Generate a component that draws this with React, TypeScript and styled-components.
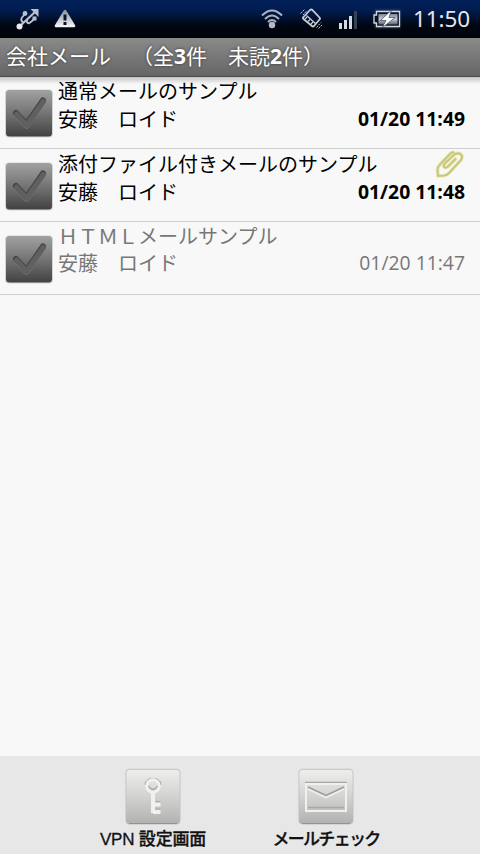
import React from "react";
import styled, { createGlobalStyle } from "styled-components";

const GlobalStyle = createGlobalStyle`
  * { box-sizing: border-box; }
  body { margin: 0; background: #f8f8f8; }
`;

const Screen = styled.div`
  width: 480px;
  height: 854px;
  display: flex;
  flex-direction: column;
  overflow: hidden;
  background: #f8f8f8;
  font-family: "Open Sans", "Noto Sans CJK JP", sans-serif;
  text-spacing-trim: space-all;
`;

const StatusBar = styled.header`
  height: 38px;
  flex: none;
  display: flex;
  align-items: center;
  justify-content: space-between;
  padding: 0 9px 0 15px;
  background: linear-gradient(#002059 0, #001c50 10px, #00153c 16px, #000c22 21px, #000610 28px, #00040a 38px);
`;

const StatusGroup = styled.div<{ $gap: number }>`
  display: flex;
  align-items: center;
  gap: ${(p) => p.$gap}px;
  svg { display: block; }
`;

const Clock = styled.time`
  width: 58px;
  margin-left: -4px;
  font-family: "Noto Sans", "Open Sans", sans-serif;
  font-size: 22.5px;
  line-height: 38px;
  letter-spacing: -0.1px;
  white-space: nowrap;
  color: #e4e6ea;
`;

const TitleBar = styled.h1`
  height: 39px;
  flex: none;
  margin: 0;
  padding-left: 6px;
  font-size: 21px;
  font-weight: 400;
  line-height: 37px;
  white-space: nowrap;
  color: #fff;
  text-shadow: 0 0 3px #333;
  background: linear-gradient(#8a8a8a, #656565);
  border-bottom: 1px solid #4b4b4b;
`;

const MailList = styled.ul`
  flex: 1;
  margin: 0;
  padding: 0;
  list-style: none;
  background: linear-gradient(#c4c4c4, #f8f8f8 7px);
`;

const MailRow = styled.li<{ $read?: boolean; $first?: boolean }>`
  height: ${(p) => (p.$first ? 72 : 73)}px;
  display: flex;
  align-items: flex-start;
  padding: ${(p) => (p.$first ? 0 : 1)}px 15px 0 4px;
  border-bottom: 1px solid #cfcfcf;
  font-size: 20px;
  color: ${(p) => (p.$read ? "#777" : "#000")};
`;

const CheckSlot = styled.div`
  width: 54px;
  flex: none;
  padding-top: 11px;
  svg { display: block; }
`;

const MailBody = styled.div`
  flex: 1;
  display: flex;
  flex-direction: column;
`;

const Line = styled.div<{ $read?: boolean; $height: number }>`
  height: ${(p) => p.$height}px;
  display: flex;
  justify-content: space-between;
  line-height: ${(p) => (p.$read ? 28 : 30)}px;
  white-space: nowrap;
`;

const DateText = styled.time<{ $read?: boolean }>`
  font-size: 19.35px;
  font-weight: ${(p) => (p.$read ? 400 : 700)};
  line-height: ${(p) => (p.$read ? 26 : 28)}px;
`;

const Footer = styled.nav`
  height: 98px;
  flex: none;
  display: flex;
  justify-content: center;
  gap: 53px;
  padding: 12px 1px 0 0;
  background: #e7e7e7;
`;

const FooterButton = styled.button`
  width: 120px;
  padding: 0;
  border: 0;
  background: none;
  display: flex;
  flex-direction: column;
  align-items: center;
`;

const FooterLabel = styled.span<{ $tracking?: number }>`
  font-family: "Liberation Sans", "Noto Sans CJK JP", sans-serif;
  font-size: 17px;
  font-weight: 500;
  letter-spacing: ${(p) => p.$tracking ?? 0}px;
  line-height: 27px;
  white-space: nowrap;
  color: #111;
  -webkit-text-stroke: 0.3px #111;
`;

const UsbIcon = () => (
  <svg width="26" height="24" viewBox="0 0 26 24" fill="none" stroke="#b9bfcb" strokeWidth="1.9">
    <path d="M5 19 L20 5" strokeWidth="2.2" />
    <path d="M8.500 16 Q5 13 7 10.500 L9.500 7.500 M12.500 12.500 Q10.500 16 14 16.300 L17 14 L19.500 11.500" />
    <path d="M15.500 2 H23.500 V10 Z" fill="#b9bfcb" stroke="none" />
    <circle cx="4.500" cy="19.500" r="3" fill="#e8eaf0" stroke="none" />
    <circle cx="10" cy="6.500" r="2.400" fill="#b9bfcb" stroke="none" />
    <rect x="17.500" y="9.500" width="4" height="4" fill="#b9bfcb" stroke="none" />
  </svg>
);

const WarningIcon = () => (
  <svg width="24" height="22" viewBox="0 0 24 22">
    <defs>
      <linearGradient id="warn" x2="0" y2="1">
        <stop stopColor="#8e95a5" />
        <stop offset="1" stopColor="#f0f2f4" />
      </linearGradient>
    </defs>
    <path d="M12 3 L21 18 H3 Z" fill="url(#warn)" stroke="url(#warn)" strokeWidth="2.600" strokeLinejoin="round" />
    <path d="M10.500 6.500 H13.500 V12.500 H10.500 Z M10.500 14 H13.500 V17 H10.500 Z" fill="#0b1426" />
  </svg>
);

const WifiIcon = () => (
  <svg width="24" height="22" viewBox="0 0 24 22" fill="none" stroke="#aab0bf" strokeWidth="2">
    <path d="M2 7.500 Q12 -2.500 22 7.500" />
    <path d="M5 11 Q12 4 19 11" />
    <path d="M8 14 Q12 10 16 14" />
    <circle cx="12" cy="17" r="3.200" fill="#b5bac6" stroke="none" />
  </svg>
);

const VibrateIcon = () => (
  <svg width="24" height="22" viewBox="0 0 24 22" fill="none" stroke="#c8ccd5" strokeWidth="1.8" strokeLinejoin="round">
    <path d="M11 2 Q12.500 1 13.500 2.200 L20.500 9.500 Q21.500 10.500 20.500 11.500 L15 18 Q14 19 13 18 L4.500 11 Q3.500 10 4.500 9 Z" />
    <path d="M7.500 7.500 L16.500 15.500" strokeWidth="1.300" />
    <path d="M6 11 L8 9 M9 13.500 L11 11.500 M12 16 L14 14" strokeWidth="1.200" />
    <path d="M1.500 5.500 L6 1 M4 7 L8 2.500 M17.500 19.500 L22 14.500 M19.500 20.500 L23.500 16.500" strokeWidth="1" strokeDasharray="2 1" />
  </svg>
);

const SignalIcon = () => (
  <svg width="19" height="19" viewBox="0 0 19 19">
    <path d="M1 13 H4 V19 H1 Z M6 10 H9 V19 H6 Z M11 6 H14 V19 H11 Z" fill="#d5d9e0" />
    <path d="M16 1 H19 V19 H16 Z" fill="#394050" />
  </svg>
);

const BatteryIcon = () => (
  <svg width="30" height="22" viewBox="0 0 30 22">
    <defs>
      <linearGradient id="battery" x2="0" y2="1">
        <stop stopColor="#81899d" />
        <stop offset=".5" stopColor="#c4c8d0" />
        <stop offset="1" stopColor="#5a6173" />
      </linearGradient>
      <filter id="glow" x="-20%" y="-20%" width="140%" height="140%"><feGaussianBlur stdDeviation="1.500" /></filter>
    </defs>
    <rect x="3" y="2" width="25" height="18" fill="#8290b0" opacity=".4" filter="url(#glow)" />
    <path d="M2 7 H4.500 V3.500 H27.500 V18.500 H4.500 V15 H2 Z" fill="#0a1122" stroke="#d4d8de" strokeWidth="1.300" />
    <rect x="6.500" y="6" width="19" height="10.500" fill="url(#battery)" />
    <path d="M19.500 2 L8.500 12.500 H14 L10 20 L23 9.500 H17 Z" fill="#fff" stroke="#364057" strokeWidth=".7" />
  </svg>
);

const CheckBox = () => (
  <svg width="50" height="51" viewBox="0 0 50 51">
    <defs>
      <linearGradient id="box" x2="0" y2="1">
        <stop stopColor="#a0a2a0" />
        <stop offset=".5" stopColor="#747474" />
        <stop offset="1" stopColor="#424242" />
      </linearGradient>
    </defs>
    <rect x="1" y="1.500" width="48" height="48" rx="4" fill="#d4d4d4" />
    <rect x="2" y="2" width="46" height="46.500" rx="3.500" fill="url(#box)" />
    <path d="M12 26 L22.500 37.500 L39 13.500" fill="none" stroke="#7c7c7c" strokeWidth="6" strokeLinecap="round" strokeLinejoin="round" />
    <path d="M12 25 L22.500 36.500 L39 12.500" fill="none" stroke="#434343" strokeWidth="6" strokeLinecap="round" strokeLinejoin="round" />
    <path d="M12.500 26 L22.500 37.200 L39.300 13.300" fill="none" stroke="#606060" strokeWidth="5" strokeLinecap="round" strokeLinejoin="round" />
  </svg>
);

const clipPath =
  "M20.500 9 L13 16.500 Q10.800 18.500 9.300 17 Q8 15.300 10 13.300 L18.500 5.300 Q22 2.200 25.500 4 Q28.500 6.500 25.500 10.500 L14 23 Q12.500 24.700 9.500 25.500 L3 26 L2.500 20 Q2.500 17 5 14.500 L15.500 3.500 Q17 2.200 18.500 2.500";

const ClipIcon = () => (
  <svg width="30" height="30" viewBox="0 0 30 30" fill="none" strokeLinecap="round" strokeLinejoin="round">
    <path d={clipPath} stroke="#eeeecb" strokeWidth="4" />
    <path d={clipPath} stroke="#c9c878" strokeWidth="2.200" />
  </svg>
);

const TileBase = () => (
  <>
    <defs>
      <linearGradient id="tile" x2="0" y2="1">
        <stop stopColor="#eeeeec" />
        <stop offset=".5" stopColor="#d2d2d0" />
        <stop offset="1" stopColor="#b1b2af" />
      </linearGradient>
    </defs>
    <rect x=".5" y=".5" width="55" height="56" rx="4" fill="#d5d5d5" />
    <rect x="1" y="1.500" width="54" height="54.500" rx="3.500" fill="url(#tile)" stroke="#c0c0be" strokeWidth=".7" />
    <path d="M4 55.500 H52" stroke="#929391" strokeWidth="1.200" />
  </>
);

const KeyTile = () => (
  <svg width="56" height="58" viewBox="0 0 56 58" fill="none">
    <TileBase />
    <path d="M20.500 17 V14.500 L24.500 11 H31.500 L35.500 14.500 V17" stroke="#a5a5a3" strokeWidth="1.500" />
    <circle cx="28" cy="18" r="6.300" stroke="#f1f1ef" strokeWidth="3" />
    <path d="M23.500 18 Q28 25 32.500 18" stroke="#a5a5a3" strokeWidth="1.300" />
    <path d="M28 25 V45 M28 36.500 H35.500 M28 44 H35.500" stroke="#f1f1ef" strokeWidth="4" />
    <path d="M30.500 33.700 H35.500 M30.500 41 H35.500" stroke="#aaaaa8" strokeWidth="1.200" />
  </svg>
);

const MailTile = () => (
  <svg width="56" height="58" viewBox="0 0 56 58" fill="none">
    <TileBase />
    <rect x="8" y="16" width="40" height="27" stroke="#f0f0ee" strokeWidth="2" />
    <path d="M7 14.300 H49 M10 39.500 H46" stroke="#a8a8a6" strokeWidth="1.300" />
    <path d="M10 21 L28 29.500 L46 21" stroke="#efefed" strokeWidth="1.800" />
    <path d="M10 19 L28 27.500 L46 19" stroke="#9e9e9c" strokeWidth="1.500" />
  </svg>
);

const mails = [
  { subject: "通常メールのサンプル", date: "01/20 11:49" },
  { subject: "添付ファイル付きメールのサンプル", date: "01/20 11:48", attachment: true },
  { subject: "ＨＴＭＬメールサンプル", date: "01/20 11:47", read: true },
];

export default function App() {
  return (
    <>
      <GlobalStyle />
      <Screen>
        <StatusBar>
          <StatusGroup $gap={12}>
            <UsbIcon />
            <WarningIcon />
          </StatusGroup>
          <StatusGroup $gap={15}>
            <WifiIcon />
            <VibrateIcon />
            <SignalIcon />
            <BatteryIcon />
            <Clock>11:50</Clock>
          </StatusGroup>
        </StatusBar>
        <TitleBar>
          会社メール　（全<b>3</b>件　未読<b>2</b>件）
        </TitleBar>
        <MailList>
          {mails.map((mail, i) => (
            <MailRow key={mail.date} $read={mail.read} $first={i === 0}>
              <CheckSlot>
                <CheckBox />
              </CheckSlot>
              <MailBody>
                <Line $read={mail.read} $height={mail.read ? 27 : 28}>
                  <span>{mail.subject}</span>
                  {mail.attachment && <ClipIcon />}
                </Line>
                <Line $read={mail.read} $height={28}>
                  <span>安藤　ロイド</span>
                  <DateText $read={mail.read}>{mail.date}</DateText>
                </Line>
              </MailBody>
            </MailRow>
          ))}
        </MailList>
        <Footer>
          <FooterButton>
            <KeyTile />
            <FooterLabel $tracking={-0.2}>VPN 設定画面</FooterLabel>
          </FooterButton>
          <FooterButton>
            <MailTile />
            <FooterLabel $tracking={-1.7}>メールチェック</FooterLabel>
          </FooterButton>
        </Footer>
      </Screen>
    </>
  );
}
